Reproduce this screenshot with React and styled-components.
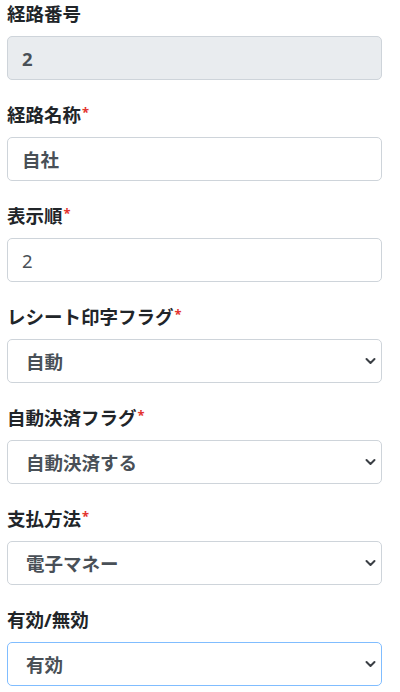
import React from "react";
import styled, { createGlobalStyle } from "styled-components";

const Global = createGlobalStyle`
  html, body { margin: 0; padding: 0; background: #fff; }
  body { font-family: "Noto Sans", "Noto Sans CJK JP", sans-serif; }
`;

const Form = styled.form`
  width: 375px;
  padding: 0 0 0 7px;
  display: flex;
  flex-direction: column;
`;

const Group = styled.div`
  display: flex;
  flex-direction: column;
  margin-bottom: 21px;
`;

const Label = styled.label`
  display: block;
  height: 28px;
  font-size: 18.5px;
  line-height: 28px;
  font-weight: 700;
  color: #212529;
  margin-bottom: 8px;
  overflow: visible;
`;

const Req = styled.span`
  color: #e3342f;
  font-size: 13px;
  line-height: 13px;
  vertical-align: 5px;
  margin-left: 1px;
`;

const Input = styled.input`
  box-sizing: border-box;
  width: 100%;
  height: 44px;
  margin: 0;
  padding: 0 14px;
  font-family: "Noto Sans", "Noto Sans CJK JP", sans-serif;
  font-size: 18.5px;
  font-weight: ${(p) => (p.$light ? 400 : 700)};
  color: #495057;
  background: ${(p) => (p.readOnly ? "#e9ecef" : "#fff")};
  border: 1px solid #ced4da;
  border-radius: 5px;
  outline: none;
`;

const SelectWrap = styled.div`
  position: relative;
  width: 100%;
`;

const Select = styled.select`
  display: block;
  box-sizing: border-box;
  width: 100%;
  height: 44px;
  margin: 0;
  padding: 0 30px 0 18px;
  font-family: "Noto Sans", "Noto Sans CJK JP", sans-serif;
  font-size: 18.5px;
  font-weight: 700;
  color: #495057;
  background: #fff;
  border: 1px solid ${(p) => (p.$focus ? "#80bdff" : "#ced4da")};
  border-radius: 5px;
  appearance: none;
  -webkit-appearance: none;
  outline: none;
`;

const Chevron = styled.svg`
  position: absolute;
  right: 6px;
  top: 50%;
  margin-top: -4px;
  width: 11px;
  height: 8px;
  pointer-events: none;
`;

const Field = ({ label, required, children }) => (
  <Group>
    <Label>
      {label}
      {required && <Req>*</Req>}
    </Label>
    {children}
  </Group>
);

const SelectField = ({ label, value, focus }) => (
  <Field label={label} required={!focus}>
    <SelectWrap>
      <Select defaultValue={value} $focus={focus}>
        <option value={value}>{value}</option>
      </Select>
      <Chevron viewBox="0 0 11 8">
        <path d="M1.5 2 L5.5 6 L9.5 2" fill="none" stroke="#3a3f44" strokeWidth="2" strokeLinecap="round" strokeLinejoin="round" />
      </Chevron>
    </SelectWrap>
  </Field>
);

export default function App() {
  return (
    <>
      <Global />
      <Form>
        <Field label="経路番号">
          <Input readOnly defaultValue="2" />
        </Field>
        <Field label="経路名称" required>
          <Input defaultValue="自社" />
        </Field>
        <Field label="表示順" required>
          <Input $light defaultValue="2" />
        </Field>
        <SelectField label="レシート印字フラグ" value="自動" />
        <SelectField label="自動決済フラグ" value="自動決済する" />
        <SelectField label="支払方法" value="電子マネー" />
        <SelectField label="有効/無効" value="有効" focus />
      </Form>
    </>
  );
}
